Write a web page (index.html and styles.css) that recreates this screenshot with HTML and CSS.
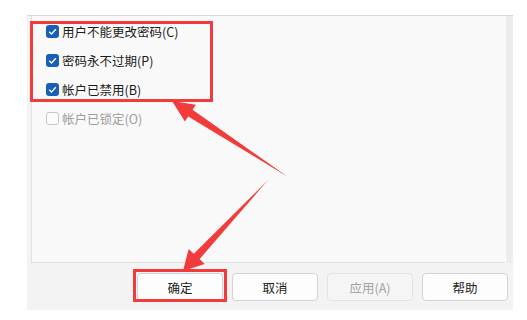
FILE: index.html
```html
<!DOCTYPE html>
<html lang="zh-CN">
<head>
<meta charset="utf-8">
<link rel="stylesheet" href="styles.css">
</head>
<body>
<div class="dialog">
  <div class="body-row">
    <div class="panel">
      <label class="row"><span class="cb on"><svg viewBox="0 0 13 13" width="13" height="13"><polyline points="3.2,6.8 5.5,9 9.8,4.2" fill="none" stroke="#fff" stroke-width="1.3"/></svg></span><span class="lbl">用户不能更改密码(C)</span></label>
      <label class="row"><span class="cb on"><svg viewBox="0 0 13 13" width="13" height="13"><polyline points="3.2,6.8 5.5,9 9.8,4.2" fill="none" stroke="#fff" stroke-width="1.3"/></svg></span><span class="lbl">密码永不过期(P)</span></label>
      <label class="row"><span class="cb on"><svg viewBox="0 0 13 13" width="13" height="13"><polyline points="3.2,6.8 5.5,9 9.8,4.2" fill="none" stroke="#fff" stroke-width="1.3"/></svg></span><span class="lbl">帐户已禁用(B)</span></label>
      <label class="row disabled"><span class="cb off"></span><span class="lbl">帐户已锁定(O)</span></label>
    </div>
    <div class="strip"></div>
  </div>
  <div class="footer">
    <button class="btn default">确定</button>
    <button class="btn">取消</button>
    <button class="btn dis">应用(A)</button>
    <button class="btn">帮助</button>
  </div>
</div>
<div class="hl hl-top"></div>
<div class="hl hl-btn"></div>
<svg class="arrows" width="527" height="320" viewBox="0 0 527 320">
  <polygon fill="#f23c3c" points="172,101 195.9,104.7 192.6,109.8 288,177 188.2,116.4 184.9,121.5"/>
  <polygon fill="#f23c3c" points="183,271 188.7,248.9 193.8,253.7 268,180 199.6,259.1 204.7,263.9"/>
</svg>
</body>
</html>
```
FILE: styles.css
```css
html, body {
  margin: 0;
  padding: 0;
  background: #ffffff;
  width: 527px;
  height: 320px;
  overflow: hidden;
  font-family: "Noto Sans CJK SC", "Noto Sans", sans-serif;
  font-size: 12.5px;
  color: #1b1b1b;
}
.dialog {
  margin: 15px 0 0 27px;
  width: 486px;
  height: 294px;
  background: #f3f3f3;
  border-top: 1px solid #d6d6d6;
  display: flex;
  flex-direction: column;
}
.body-row {
  display: flex;
  height: 247px;
  padding-left: 4px;
}
.panel {
  flex: 1;
  background: #f9f9f9;
  border-left: 1px solid #e1e1e1;
  border-bottom: 1px solid #e1e1e1;
  padding: 1px 0 0 14px;
  display: flex;
  flex-direction: column;
}
.strip {
  width: 8px;
  background: #e8edf2;
  border-left: 1px solid #fbfbfb;
  border-right: 2px solid #f8ebe4;
  box-sizing: border-box;
}
.row {
  height: 29px;
  display: flex;
  align-items: center;
  gap: 3px;
}
.cb {
  width: 13px;
  height: 13px;
  border-radius: 3px;
  box-sizing: border-box;
  display: flex;
}
.cb.on {
  background: #1a5fb7;
}
.cb.off {
  border: 1px solid #c8c8c8;
  background: #fbfbfb;
}
.lbl {
  line-height: 16px;
}
.disabled .lbl {
  color: #9d9d9d;
}
.footer {
  display: flex;
  gap: 9px;
  padding: 10px 0 0 110px;
}
.btn {
  width: 86px;
  height: 28px;
  border: 1px solid #d3d3d3;
  border-radius: 4px;
  background: #fdfdfd;
  font-family: inherit;
  font-size: 12.5px;
  color: #1b1b1b;
  padding: 0;
}
.btn.default {
  border-color: #c9d7e3;
  border-bottom-color: #4e7aa6;
}
.btn.dis {
  background: #f5f5f5;
  border-color: #e3e3e3;
  color: #a2a2a2;
}
.hl {
  position: absolute;
  border: 3px solid #f23c3c;
  box-sizing: border-box;
}
.hl-top {
  left: 30px;
  top: 21px;
  width: 183px;
  height: 81px;
}
.hl-btn {
  left: 133px;
  top: 269px;
  width: 94px;
  height: 33px;
}
.arrows {
  position: absolute;
  left: 0;
  top: 0;
}
```
